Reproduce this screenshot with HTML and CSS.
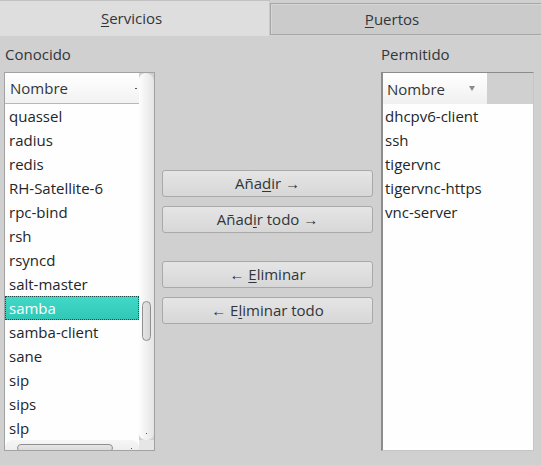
FILE: index.html
```html
<!DOCTYPE html>
<html>
<head>
<meta charset="utf-8">
<link rel="stylesheet" href="styles.css">
</head>
<body>
<div class="tabs">
  <div class="tab active"><span><u>S</u>ervicios</span></div>
  <div class="tab other"><span><u>P</u>uertos</span></div>
</div>
<div class="main">
  <div class="label">Conocido</div>
  <div></div>
  <div class="label right-label">Permitido</div>

  <div class="list known">
    <div class="view">
      <div class="head"><span>Nombre</span><i class="dot"></i></div>
      <div class="rows">
        <div class="row">quassel</div>
        <div class="row">radius</div>
        <div class="row">redis</div>
        <div class="row">RH-Satellite-6</div>
        <div class="row">rpc-bind</div>
        <div class="row">rsh</div>
        <div class="row">rsyncd</div>
        <div class="row">salt-master</div>
        <div class="row selected">samba</div>
        <div class="row">samba-client</div>
        <div class="row">sane</div>
        <div class="row">sip</div>
        <div class="row">sips</div>
        <div class="row">slp</div>
      </div>
      <div class="hscroll"><div class="hthumb"></div><i class="hdot"></i></div>
    </div>
    <div class="vcol">
      <div class="vscroll"><div class="vthumb"></div><i class="vdot"></i></div>
      <div class="corner"></div>
    </div>
  </div>

  <div class="buttons">
    <button class="btn">Aña<u>d</u>ir →</button>
    <button class="btn">Añad<u>i</u>r todo →</button>
    <button class="btn gap">← <u>E</u>liminar</button>
    <button class="btn">← E<u>l</u>iminar todo</button>
  </div>

  <div class="list allowed">
    <div class="headrow">
      <div class="head"><span>Nombre</span><i class="tri"></i></div>
      <div class="fill"></div>
    </div>
    <div class="rows">
      <div class="row">dhcpv6-client</div>
      <div class="row">ssh</div>
      <div class="row">tigervnc</div>
      <div class="row">tigervnc-https</div>
      <div class="row">vnc-server</div>
    </div>
  </div>
</div>
</body>
</html>
```

FILE: styles.css
```css
* { box-sizing: border-box; }
html, body {
  margin: 0;
  padding: 0;
  background: #d0d0d0;
  width: 541px;
  height: 465px;
  overflow: hidden;
  font-family: "Open Sans", "Noto Sans", sans-serif;
  font-size: 15px;
  color: #31363b;
}
u { text-decoration: underline; text-underline-offset: 2px; text-decoration-thickness: 1px; }

.tabs {
  display: flex;
  height: 36px;
  border-bottom: 1px solid #d4d4d4;
}
.tab {
  display: flex;
  align-items: center;
  justify-content: center;
  line-height: 20px;
}
.tab.active {
  width: 270px;
  height: 36px;
  background: #dedede;
  border-top: 1px solid #c2c2c2;
  border-right: 1px solid #cacaca;
  padding-right: 6px;
  padding-bottom: 2px;
}
.tab.other {
  flex: 1;
  margin-top: 3px;
  height: 32px;
  background: #cbcbcb;
  border: 1px solid #a6a6a6;
  border-right: none;
  box-shadow: inset 1px 1px 0 #d6d6d6;
  padding-right: 28px;
}

.main {
  display: grid;
  grid-template-columns: 151px 211px 153px;
  grid-template-rows: 36px 379px;
  column-gap: 7px;
  padding-left: 4px;
}
.label {
  line-height: 20px;
  padding-top: 8px;
  padding-left: 1px;
}
.right-label { padding-left: 1px; }

.list {
  background: #fefefe;
  border: 1px solid #a2a2a2;
  overflow: hidden;
  color: #232629;
}
.known {
  display: grid;
  grid-template-columns: 1fr 15px;
}
.view {
  display: flex;
  flex-direction: column;
  min-width: 0;
}
.head {
  height: 31px;
  flex: none;
  border-bottom: 1px solid #b8b8b8;
  background: linear-gradient(#ffffff, #f2f2f2);
  display: flex;
  align-items: center;
  padding-left: 5px;
  color: #31363b;
  position: relative;
  line-height: 20px;
}
.dot {
  position: absolute;
  right: 2px;
  top: 15px;
  width: 2px;
  height: 1px;
  background: #555;
}
.rows {
  flex: 1;
  overflow: hidden;
}
.row {
  height: 24px;
  line-height: 24px;
  padding-left: 4px;
  white-space: nowrap;
}
.row.selected {
  background: linear-gradient(#43d9c8, #2fc7b5);
  color: #ffffff;
  outline: 1px dotted #1d4a44;
  outline-offset: -1px;
}
.hscroll {
  height: 16px;
  flex: none;
  background: linear-gradient(#f6f6f6, #e9e9e9);
  border-radius: 7px;
  position: relative;
}
.hthumb {
  position: absolute;
  left: 12px;
  top: 4px;
  width: 96px;
  height: 8px;
  border: 1px solid #8f8f8f;
  border-radius: 5px;
  background: linear-gradient(#e6e6e6, #d8d8d8);
}
.hdot {
  position: absolute;
  right: 7px;
  top: 8px;
  width: 1px;
  height: 1px;
  background: #555;
}
.vcol {
  display: flex;
  flex-direction: column;
  background: #d0d0d0;
}
.vscroll {
  flex: 1;
  position: relative;
  background: linear-gradient(90deg, #fdfdfd, #e4e4e4);
  border-radius: 7px;
  border-top-right-radius: 9px;
}
.vthumb {
  position: absolute;
  left: 3px;
  top: 228px;
  width: 9px;
  height: 40px;
  border: 1px solid #8f8f8f;
  border-radius: 5px;
  background: linear-gradient(90deg, #e4e4e4, #d6d6d6);
}
.vdot {
  position: absolute;
  left: 7px;
  bottom: 6px;
  width: 1px;
  height: 1px;
  background: #555;
}
.corner {
  height: 16px;
  background: #e6e6e6;
}

.buttons {
  display: flex;
  flex-direction: column;
  padding-top: 98px;
}
.btn {
  height: 27px;
  margin-bottom: 9px;
  border: 1px solid #a9a9a9;
  border-radius: 3px;
  background: linear-gradient(#e5e5e5, #d7d7d7);
  font-family: "Open Sans", "Noto Sans", sans-serif;
  font-size: 15px;
  color: #31363b;
  line-height: 23px;
  padding: 0;
}
.btn.gap { margin-top: 19px; }

.allowed {
  border-color: #8c8c8c #c6c6c6 #c6c6c6 #8c8c8c;
  border-left-width: 2px;
  width: 153px;
  margin-left: 1px;
}
.headrow {
  display: flex;
  height: 31px;
}
.allowed .head {
  width: 104px;
  height: 31px;
  border-bottom: none;
  background: linear-gradient(#ffffff, #f0f0f0);
  padding-left: 4px;
}
.fill {
  flex: 1;
  background: #d0d0d0;
}
.tri {
  position: absolute;
  left: 86px;
  top: 13px;
  width: 0;
  height: 0;
  border-left: 3.5px solid transparent;
  border-right: 3.5px solid transparent;
  border-top: 5px solid #8a8a8a;
}
.allowed .row { padding-left: 2px; }
```
